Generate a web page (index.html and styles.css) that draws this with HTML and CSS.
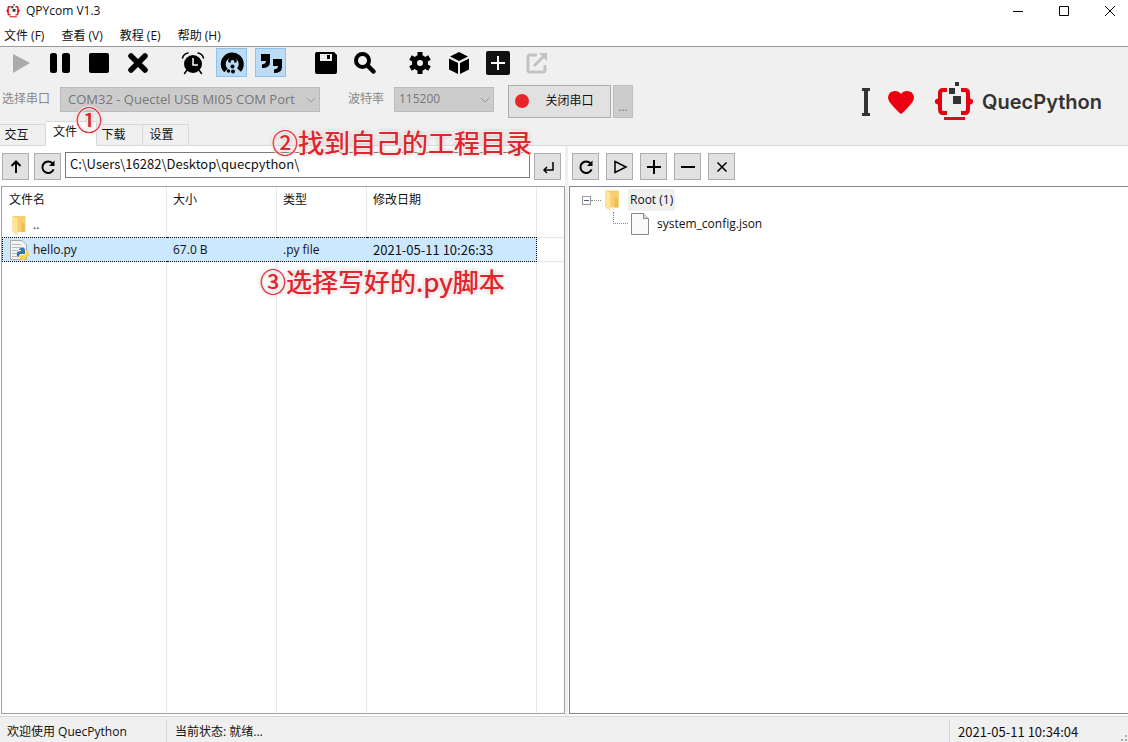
FILE: index.html
```html
<!DOCTYPE html>
<html lang="zh-CN">
<head>
<meta charset="utf-8">
<title>QPYcom V1.3</title>
<link rel="stylesheet" href="styles.css">
</head>
<body>
<svg class="defs" aria-hidden="true">
  <symbol id="brand" viewBox="0 0 38 40">
    <g fill="none" stroke="#e60012" stroke-width="4"><path d="M12 8H8Q5 8 5 11V27Q5 31 8 31H12"/><path d="M26 8H30Q33 8 33 11V27Q33 31 30 31H26"/></g>
    <path fill="#e60012" d="M5 15L0 18V21L5 24ZM33 15L38 18V21L33 24Z"/>
    <path fill="#d7101f" d="M9 35H30V38H9Z"/>
    <path fill="#333" d="M20 0H24V4H20ZM14 6H20V12H14ZM18 14H26V22H18Z"/>
  </symbol>
  <symbol id="reload" viewBox="0 0 16 16"><path d="M12.6 4.4A5.8 5.8 0 1 0 13.6 10.4" fill="none" stroke="#000" stroke-width="2"/><path d="M14.5 1.5V7H9Z"/></symbol>
  <symbol id="folder" viewBox="0 0 15 20"><path fill="#f5cf6e" d="M1 1H14V17H5L1 15Z"/><path fill="#e9bd55" d="M10 8L13 9V17H10Z"/><path fill="#ffe398" d="M1 1L6 3V20L1 17Z"/></symbol>
</svg>

<header class="titlebar">
  <svg class="app-icon"><use href="#brand"/></svg>
  <h1 class="app-title">QPYcom V1.3</h1>
  <div class="window-buttons">
    <button aria-label="最小化"><svg width="12" height="12"><path d="M1 6.5H11"/></svg></button>
    <button aria-label="最大化"><svg width="12" height="12"><path d="M1.500 1.500H10.500V10.500H1.500Z"/></svg></button>
    <button aria-label="关闭"><svg width="12" height="12"><path d="M1 1L11 11M11 1L1 11"/></svg></button>
  </div>
</header>

<nav class="menubar">
  <button>文件 (F)</button><button>查看 (V)</button><button>教程 (E)</button><button>帮助 (H)</button>
</nav>

<section class="control-area">
  <div class="controls">
    <div class="toolbar">
      <div class="tool-group">
        <button aria-label="运行" disabled><svg viewBox="0 0 24 24"><path fill="#aaa" d="M4 3L21 12L4 22Z"/></svg></button>
        <button aria-label="暂停"><svg viewBox="0 0 24 24"><rect x="2" y="2" width="7" height="20" rx="2.500"/><rect x="14" y="2" width="8" height="20" rx="2.500"/></svg></button>
        <button aria-label="停止"><svg viewBox="0 0 24 24"><rect x="2" y="2" width="20" height="20" rx="2"/></svg></button>
        <button aria-label="清除"><svg viewBox="0 0 24 24"><path d="M5 5L19 19M19 5L5 19" fill="none" stroke="#000" stroke-width="5.500" stroke-linecap="round"/></svg></button>
      </div>
      <div class="tool-group">
        <button aria-label="定时"><svg viewBox="0 0 24 24"><circle cx="12" cy="13" r="9"/><path d="M1.500 7Q2.500 3 7 2M17 2Q21.500 3 22.500 7M6 19L3.500 22.500M18 19L20.500 22.500" fill="none" stroke="#000" stroke-width="1.500" stroke-linecap="round"/><path d="M12 7V14H17" fill="none" stroke="#fff" stroke-width="1.500"/></svg></button>
        <button class="is-on" aria-label="循环" aria-pressed="true"><svg viewBox="0 0 24 24"><path d="M6 19.500A9 9 0 1 1 19 19" fill="none" stroke="#000" stroke-width="5"/><path d="M8 10.500A4.500 4.500 0 0 1 17 10.500L15 12H10Z"/><circle cx="12.500" cy="11" r="2" fill="#bbdcf4"/><circle cx="12.500" cy="15.500" r="2"/><circle cx="8.500" cy="20" r="1.800"/><circle cx="13" cy="20.500" r="2"/></svg></button>
        <button class="is-on" aria-label="引用" aria-pressed="true"><svg viewBox="0 0 24 24"><path d="M2 3H11V11Q11 17 3 17V13.500Q7 13 7 10H2ZM14 8H23V16Q23 22 15 22V18.500Q19 18 19 15H14Z"/></svg></button>
      </div>
      <div class="tool-group">
        <button aria-label="保存"><svg viewBox="0 0 24 24"><path d="M3 1H20L23 4V21Q23 23 21 23H3Q1 23 1 21V3Q1 1 3 1Z"/><path fill="#eee" d="M6 3H18V10H6Z"/><path d="M13 4H16V8H13Z"/></svg></button>
        <button aria-label="搜索"><svg viewBox="0 0 24 24"><circle cx="9.500" cy="9.500" r="6.500" fill="none" stroke="#000" stroke-width="4"/><path d="M15 15L20.500 20.500" stroke="#000" stroke-width="4.500" stroke-linecap="round"/></svg></button>
      </div>
      <div class="tool-group">
        <button aria-label="设置"><svg viewBox="0 0 24 24"><g fill="none" stroke="#000"><circle cx="12" cy="12" r="5.500" stroke-width="5"/><path d="M12 1V6M12 18V23M2.500 6.500L6.800 9M17.200 15L21.500 17.500M2.500 17.500L6.800 15M17.200 9L21.500 6.500" stroke-width="5"/></g></svg></button>
        <button aria-label="模块"><svg viewBox="0 0 24 24"><path d="M12 1L21 5.500L12 10L3 5.500ZM2 7.500L11 12V23L2 18.500ZM22 7.500L13 12V23L22 18.500Z"/></svg></button>
        <button aria-label="添加"><svg viewBox="0 0 24 24"><rect width="24" height="24" rx="2" fill="#111"/><path d="M5 12H19M12 5V19" stroke="#fff" stroke-width="2"/></svg></button>
        <button aria-label="打开外部链接" disabled><svg viewBox="0 0 24 24"><path d="M12 4H5Q3 4 3 6V19Q3 21 5 21H18Q20 21 20 19V14" fill="none" stroke="#c3c3c3" stroke-width="3"/><path d="M9 15L20 4" stroke="#c3c3c3" stroke-width="3"/><path d="M14 2H22V10Z" fill="#c3c3c3"/></svg></button>
      </div>
    </div>
    <div class="serial">
      <label for="port">选择串口</label>
      <span class="combo combo-port"><select id="port" disabled><option>COM32 - Quectel USB MI05 COM Port</option></select><svg viewBox="0 0 10 6"><path d="M1 1L5 5L9 1"/></svg></span>
      <label class="baud-label" for="baud">波特率</label>
      <span class="combo combo-baud"><select id="baud" disabled><option>115200</option></select><svg viewBox="0 0 10 6"><path d="M1 1L5 5L9 1"/></svg></span>
      <button class="port-toggle"><span class="dot"></span><span class="port-text">关闭串口</span></button>
      <button class="more" disabled>...</button>
    </div>
    <div class="tabs" role="tablist">
      <button role="tab">交互</button><button role="tab" class="active" aria-selected="true">文件</button><button role="tab">下载</button><button role="tab">设置</button>
    </div>
  </div>
  <div class="brand">
    <svg class="beam" viewBox="0 0 8 28"><path d="M0 0H8V3H6V25H8V28H0V25H2V3H0Z"/></svg>
    <svg class="heart" viewBox="0 0 26 24"><path d="M13 24Q10 22 4 15Q0 11 0 7Q1 1 7 1Q11 1 13 4Q15 1 19 1Q25 1 26 7Q26 11 22 15Q16 22 13 24Z"/></svg>
    <svg class="logo"><use href="#brand"/></svg>
    <span>QuecPython</span>
  </div>
</section>

<main class="workspace">
  <section class="pane local">
    <div class="pane-bar">
      <button class="square" aria-label="上级目录"><svg viewBox="0 0 16 16"><path d="M8 14V3M3.500 7L8 2.500L12.500 7" class="line"/></svg></button>
      <button class="square" aria-label="刷新"><svg><use href="#reload"/></svg></button>
      <input class="path" type="text" aria-label="路径" value="C:\Users\16282\Desktop\quecpython\">
      <button class="square" aria-label="转到"><svg viewBox="0 0 16 16"><path d="M13 3V11H4M7 8L4 11L7 14" class="line thin"/></svg></button>
    </div>
    <div class="files">
      <table>
        <colgroup><col class="c-name"><col class="c-size"><col class="c-type"><col class="c-date"><col></colgroup>
        <thead><tr><th>文件名</th><th>大小</th><th>类型</th><th>修改日期</th><th></th></tr></thead>
        <tbody>
          <tr><td><span class="file"><svg class="file-icon"><use href="#folder"/></svg>..</span></td><td></td><td></td><td></td><td></td></tr>
          <tr class="selected"><td><span class="file"><svg class="file-icon" viewBox="0 0 20 20"><path fill="#f3f3f3" stroke="#aaa" d="M1.500 .5H13L17.500 5V19.500H1.500Z"/><path stroke="#bbb" d="M3 4.500H12M3 7.500H15M3 10.500H9M3 13.500H8M3 16.500H8"/><path fill="#3675a9" d="M12 8Q16 7 16 10V14H11Q10 15 10 17Q7 17 8 13Q8 11 12 11V10H10Q10 8 12 8Z"/><path fill="#ffd43b" d="M17 11Q20 11 20 14Q20 17 17 17V18Q16 20 13 20Q10 19 11 16Q12 15 15 15Q17 15 17 11Z"/></svg>hello.py</span></td><td>67.0 B</td><td>.py file</td><td>2021-05-11 10:26:33</td><td></td></tr>
          <tr class="filler"><td></td><td></td><td></td><td></td><td></td></tr>
        </tbody>
      </table>
    </div>
  </section>
  <div class="splitter"></div>
  <section class="pane device">
    <div class="pane-bar">
      <button class="square" aria-label="刷新设备"><svg><use href="#reload"/></svg></button>
      <button class="square" aria-label="运行脚本"><svg viewBox="0 0 16 16"><path d="M3 2.500L14 8L3 13.500Z" class="line thin"/></svg></button>
      <button class="square" aria-label="新增"><svg viewBox="0 0 16 16"><path d="M1 8H15M8 1V15" class="line"/></svg></button>
      <button class="square" aria-label="删除"><svg viewBox="0 0 16 16"><path d="M1 8H15" class="line"/></svg></button>
      <button class="square" aria-label="关闭设备"><svg viewBox="0 0 16 16"><path d="M3.500 3.500L12.500 12.500M12.500 3.500L3.500 12.500" class="line thin"/></svg></button>
    </div>
    <ul class="tree">
      <li class="node root"><svg class="expander" viewBox="0 0 9 9"><rect x=".5" y=".5" width="8" height="8" fill="#fff" stroke="#999"/><path d="M2 4.500H7" stroke="#4759a3"/></svg><span class="dash"></span><svg class="tree-folder"><use href="#folder"/></svg><span class="node-label">Root (1)</span></li>
      <li class="node child"><span class="elbow"></span><svg class="doc" viewBox="0 0 18 22"><path fill="#fafafa" stroke="#888" d="M.5 .5H12.500L17.500 5.500V21.500H.5Z"/><path fill="#ddd" stroke="#888" d="M12.500 .5V5.500H17.500"/></svg><span>system_config.json</span></li>
    </ul>
  </section>
</main>

<footer class="statusbar">
  <span class="welcome">欢迎使用 QuecPython</span>
  <span class="state">当前状态: 就绪...</span>
  <time>2021-05-11 10:34:04</time>
  <svg class="grip" viewBox="0 0 8 8"><path fill="#aaa" d="M5 1H7V3H5ZM1 5H3V7H1ZM5 5H7V7H5Z"/></svg>
</footer>

<div class="note note-one">①</div>
<div class="note note-two">②找到自己的工程目录</div>
<div class="note note-three">③选择写好的.py脚本</div>
</body>
</html>
```

FILE: styles.css
```css
* { box-sizing: border-box; }
body {
  margin: 0;
  height: 100vh;
  display: flex;
  flex-direction: column;
  overflow: hidden;
  background: #fff;
  color: #111;
  font: 12px/16px "Open Sans", "Noto Sans CJK SC", sans-serif;
}
button, input, select { font: inherit; color: inherit; margin: 0; padding: 0; border-radius: 0; }
button { border: 0; background: none; white-space: nowrap; }
svg { display: block; flex: none; }
.defs { position: absolute; width: 0; height: 0; }

.titlebar { display: flex; align-items: center; height: 22px; padding-left: 6px; gap: 6px; }
.app-icon { width: 14px; height: 14px; }
.app-title { margin: 0; font-size: 12px; font-weight: 400; flex: 1; }
.window-buttons { display: flex; margin-right: -5px; }
.window-buttons button { width: 46px; height: 22px; display: grid; place-items: center; }
.window-buttons path { fill: none; stroke: #000; }

.menubar { display: flex; gap: 17px; height: 24px; padding: 4px 4px 0; align-items: center; }

.control-area { display: flex; justify-content: space-between; background: #f0f0f0; border-top: 1px solid #999; border-bottom: 1px solid #d9d9d9; }
.toolbar { display: flex; gap: 24px; padding: 1px 5px 0; }
.tool-group { display: flex; gap: 8px; }
.tool-group button { width: 31px; height: 29px; display: grid; place-items: center; border: 1px solid transparent; }
.tool-group svg { width: 24px; height: 24px; }
.tool-group .is-on { background: #bbdcf4; border-color: #8cc3ee; }

.serial { display: flex; align-items: center; padding: 7px 2px 0; height: 41px; color: #888; }
.serial label { width: 58px; padding-bottom: 4px; }
.combo { position: relative; height: 25px; margin-bottom: 4px; }
.combo select { appearance: none; width: 100%; height: 25px; padding: 0 7px; border: 1px solid #bbb; background: #ccc; color: #777; opacity: 1; }
.combo-port select { font-size: 13px; }
.combo-baud select { padding: 0 4px; }
.combo-port { width: 260px; }
.combo-baud { width: 100px; }
.combo svg { position: absolute; right: 4px; top: 10px; width: 10px; height: 6px; fill: none; stroke: #999; }
.serial .baud-label { width: 46px; margin-left: 28px; }
.port-toggle { display: flex; align-items: center; width: 103px; height: 33px; margin-left: 14px; border: 1px solid #adadad; background: #e1e1e1; color: #111; }
.dot { width: 14px; height: 14px; margin-left: 6px; border-radius: 50%; background: #ea242b; }
.port-text { flex: 1; text-align: center; }
.more { width: 20px; height: 33px; margin-left: 2px; padding-top: 12px; border: 1px solid #bfbfbf; background: #ccc; color: #777; }

.tabs { display: flex; align-items: flex-end; height: 28px; padding-top: 4px; margin-bottom: -1px; }
.tabs button { width: 46px; height: 22px; padding-right: 12px; border: 1px solid #d9d9d9; border-left: 0; }
.tabs button:first-child { width: 46px; }
.tabs button:last-child { padding-right: 8px; }
.tabs .active { width: 51px; height: 25px; background: #fff; border-bottom: 0; padding-bottom: 4px; }

.brand { display: flex; align-items: center; padding: 12px 26px 0 0; color: #333; font: 600 20px/24px Inter, sans-serif; }
.beam { width: 8px; height: 28px; fill: #333; }
.heart { width: 26px; height: 24px; margin-left: 18px; fill: #eb0010; }
.logo { width: 38px; height: 40px; margin-left: 21px; }
.brand span { margin-left: 9px; }

.workspace { flex: 1; min-height: 0; display: grid; grid-template-columns: 565fr 3px 560fr; }
.splitter { background: #f0f0f0; }
.pane { display: flex; flex-direction: column; min-width: 0; padding-bottom: 2px; }
.pane-bar { display: flex; align-items: center; height: 40px; padding: 1px 4px 0 2px; gap: 4px; }
.local .square + .square { margin-left: 1px; }
.device .pane-bar { gap: 7px; padding-left: 4px; }
.square { width: 27px; height: 27px; display: grid; place-items: center; border: 1px solid #adadad; background: #e1e1e1; flex: none; }
.square svg { width: 16px; height: 16px; }
.line { fill: none; stroke: #000; stroke-width: 2; }
.thin { stroke-width: 1.500; }
.path { flex: 1; min-width: 0; height: 26px; margin-bottom: 3px; padding: 0 4px 3px; border: 1px solid #7a7a7a; background: #fff; font: 13px/16px "Noto Sans CJK SC", sans-serif; }

.files { flex: 1; margin-left: 1px; border: 1px solid #a0a0a0; }
table { width: 100%; height: 100%; table-layout: fixed; border-collapse: separate; border-spacing: 0; }
.c-name { width: 165px; }
.c-size { width: 110px; }
.c-type { width: 90px; }
.c-date { width: 170px; }
th, td { height: 25px; padding: 0 6px; text-align: left; font-weight: 400; border-right: 1px solid #e8e8e8; }
th:first-child, td:first-child { padding-left: 7px; }
th:last-child, td:last-child { border-right: 0; }
.filler td { height: 100%; }
.file { display: flex; align-items: center; gap: 4px; }
.file-icon { width: 20px; height: 20px; }
.selected td { background: #cce8ff; border-top: 1px dotted #111; border-bottom: 1px dotted #111; border-right: 0; }
.selected td:first-child { padding-left: 6px; border-left: 1px dotted #111; }
.selected td:nth-child(4) { border-right: 1px dotted #111; }
.selected td:last-child { background: none; border-top: 1px solid #e8e8e8; border-bottom: 1px solid #e8e8e8; }

.tree { flex: 1; list-style: none; margin: 0 0 0 1px; padding: 1px 0 0 12px; border: 1px solid #828790; border-right: 0; }
.node { display: flex; align-items: center; height: 24px; }
.expander { width: 9px; height: 9px; }
.dash { width: 10px; border-top: 1px dotted #888; }
.tree-folder { width: 16px; height: 22px; margin-left: 3px; }
.node-label { margin-left: 8px; padding: 3px 2px; background: #f0f0f0; }
.child { padding-left: 31px; }
.elbow { width: 15px; height: 12px; margin: 0 3px 12px 0; border-left: 1px dotted #888; border-bottom: 1px dotted #888; }
.doc { width: 18px; height: 22px; margin-right: 8px; }

.statusbar { display: flex; height: 26px; background: #f0f0f0; border-top: 1px solid #d7d7d7; padding-top: 3px; }
.statusbar > * { padding: 4px 8px 0; }
.statusbar .welcome { width: 167px; padding-left: 7px; border-right: 1px solid #d7d7d7; }
.state { flex: 1; border-right: 1px solid #d7d7d7; }
time { width: 170px; }
.statusbar .grip { width: 8px; height: 8px; padding: 0; align-self: flex-end; }
time, .selected td:nth-child(4) { font-family: "Noto Sans CJK SC", sans-serif; font-size: 13px; }

.note {
  position: absolute;
  color: #e0242d;
  font: 26px/32px "Noto Sans CJK SC", sans-serif;
  white-space: nowrap;
  text-shadow: 0 0 1px #e0242d, 1px 1px 1px #fff, -1px -1px 1px #fff, 1px -1px 1px #fff, -1px 1px 1px #fff, 0 0 4px #999;
}
.note-one { left: 76px; top: 103px; }
.note-two { left: 272px; top: 126px; }
.note-three { left: 260px; top: 265px; }
```
